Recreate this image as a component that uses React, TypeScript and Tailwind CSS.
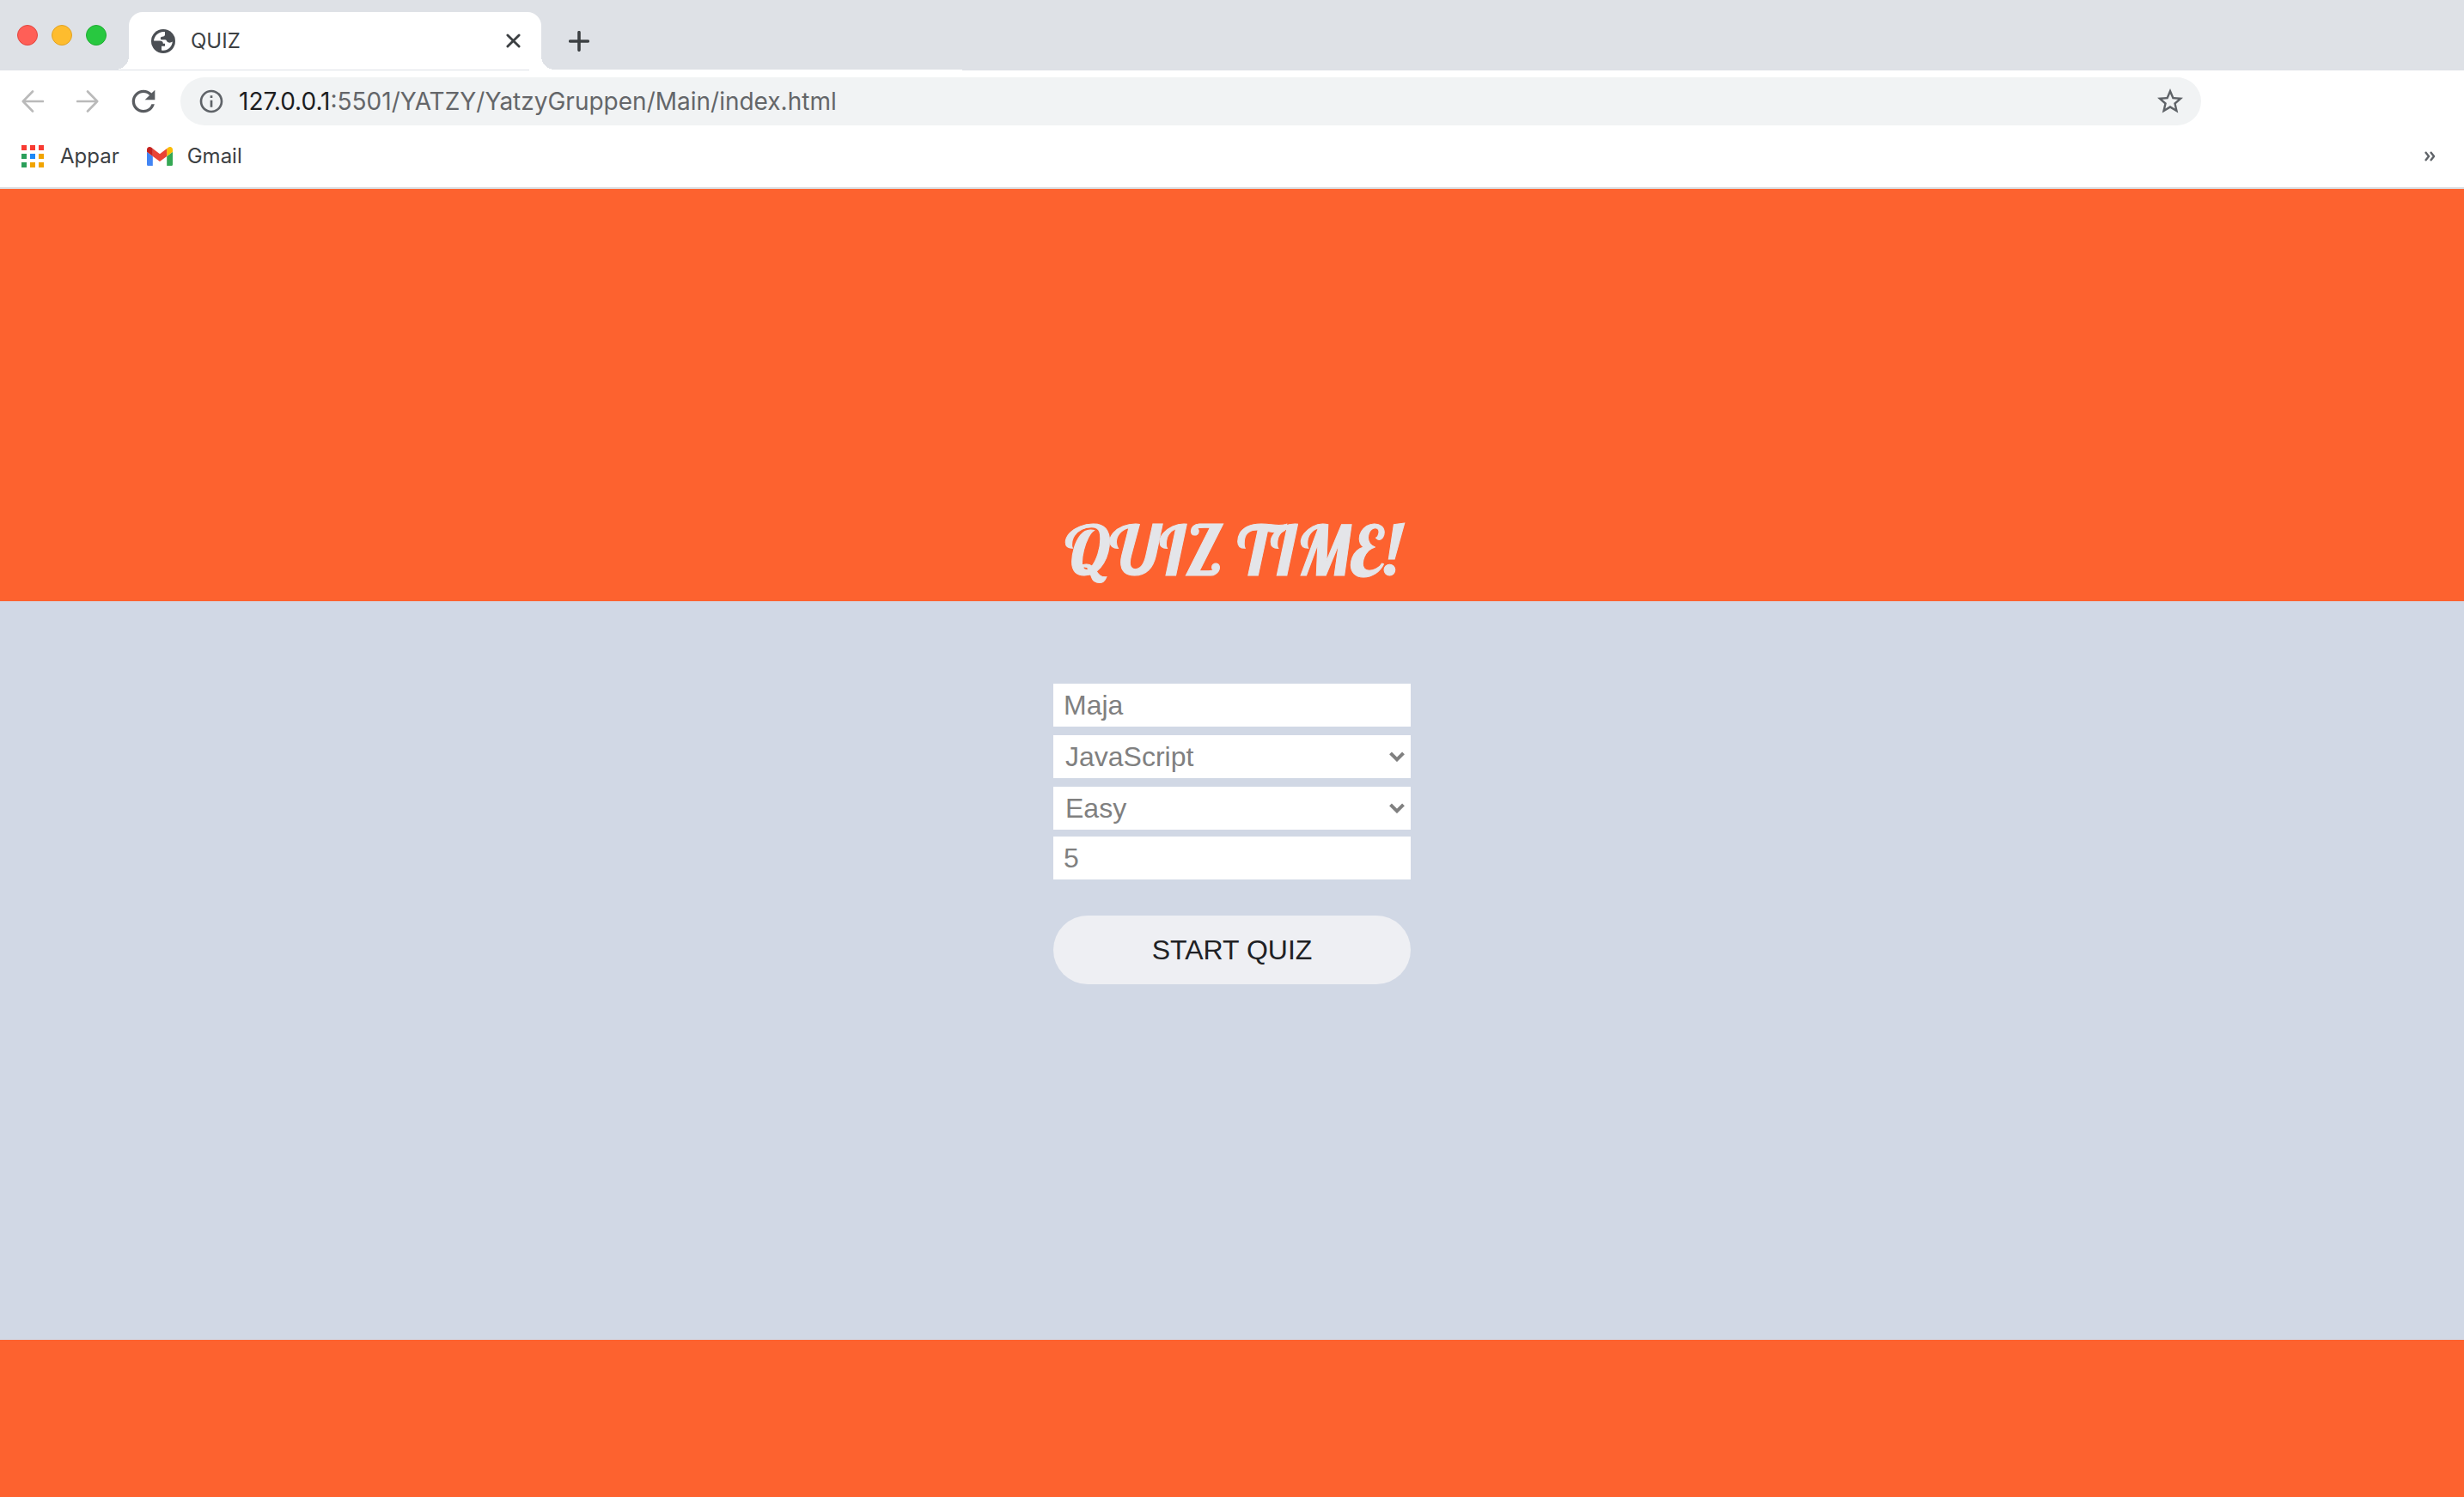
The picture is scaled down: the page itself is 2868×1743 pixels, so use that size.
import React from "react";
import { MdInfoOutline, MdRefresh, MdStarBorder } from "react-icons/md";

const APP_DOTS = [
  "fill-[#f83b32]", "fill-[#f83b32]", "fill-[#f83b32]",
  "fill-[#2b9f5a]", "fill-[#1e88f7]", "fill-[#f1a400]",
  "fill-[#2b9f5a]", "fill-[#f1a400]", "fill-[#f1a400]",
];

function GlobeIcon() {
  return (
    <svg viewBox="0 0 28 28" className="size-7" aria-hidden="true">
      <circle cx="14" cy="14" r="14" fill="#4b4f54" />
      <path
        d="M16 3C9 2 3.500 7.500 3 13.500h7c2.500 0 3.800 1 3.800 3.300H16v3h-4v4.800c6.500 1.200 12.300-3.500 12.800-10-2 1.500-5.300 1.500-6.600-.5-.5-1-.7-1.800-2-1.800H12c-1.500 0-1.500-3.500.5-3.500 2.500 0 3.500-1.200 3.500-2.500z"
        fill="#fff"
      />
    </svg>
  );
}

function BackIcon({ flipped = false }: { flipped?: boolean }) {
  return (
    <svg viewBox="0 0 26 26" className={flipped ? "size-[26px] rotate-180" : "size-[26px]"} aria-hidden="true">
      <path d="M13 1.500 1.800 13 13 24.500M2 13h23" fill="none" stroke="#bababa" strokeWidth="2.600" strokeLinecap="round" strokeLinejoin="round" />
    </svg>
  );
}

function GmailIcon() {
  return (
    <svg viewBox="52 42 88 66" className="w-[30px]" aria-hidden="true">
      <path fill="#4285f4" d="M58 108h14V74L52 59v43c0 3.320 2.690 6 6 6" />
      <path fill="#34a853" d="M120 108h14c3.320 0 6-2.690 6-6V59l-20 15" />
      <path fill="#fbbc04" d="M120 48v26l20-15v-8c0-7.420-8.470-11.650-14.400-7.200" />
      <path fill="#ea4335" d="M72 74V48l24 18 24-18v26L96 92" />
      <path fill="#c5221f" d="M52 51v8l20 15V48l-5.600-4.200c-5.940-4.450-14.400-.22-14.400 7.200" />
    </svg>
  );
}

function BrowserChrome() {
  return (
    <header className="flex flex-col bg-white font-['Inter',sans-serif] text-[#3c4043]">
      <div className="flex h-[81px] items-end bg-[#dee1e6]">
        <div className="flex h-full w-[150px] shrink-0 items-center gap-4 pl-5">
          <button aria-label="Close window" className="size-6 rounded-full border border-[#e2463f] bg-[#ff5f57]" />
          <button aria-label="Minimize window" className="size-6 rounded-full border border-[#e1a325] bg-[#febc2e]" />
          <button aria-label="Zoom window" className="size-6 rounded-full border border-[#1fae33] bg-[#28c840]" />
        </div>
        <div className="relative flex h-[67px] w-[480px] items-center rounded-t-2xl bg-white pr-6 pl-[26px] before:absolute before:bottom-0 before:-left-4 before:size-4 before:bg-[radial-gradient(circle_at_top_left,transparent_16px,white_16px)] after:absolute after:-right-4 after:bottom-0 after:size-4 after:bg-[radial-gradient(circle_at_top_right,transparent_16px,white_16px)]">
          <GlobeIcon />
          <span className="ml-[18px] flex-1 text-2xl">QUIZ</span>
          <button aria-label="Close tab">
            <svg viewBox="0 0 18 18" className="size-[17px]" aria-hidden="true">
              <path d="M2 2l14 14M16 2 2 16" stroke="#3c4043" strokeWidth="3" strokeLinecap="round" />
            </svg>
          </button>
        </div>
        <button aria-label="New tab" className="ml-8 flex h-[67px] items-center">
          <svg viewBox="0 0 24 24" className="size-6" aria-hidden="true">
            <path d="M12 1.700v20.600M1.700 12h20.600" stroke="#3c4043" strokeWidth="3.600" strokeLinecap="round" />
          </svg>
        </button>
      </div>
      <div className="flex h-px bg-[#dee1e6]">
        <div className="ml-[616px] w-[504px] bg-white" />
      </div>
      <nav aria-label="Navigation" className="flex h-[72px] items-center pl-[25px]">
        <button aria-label="Back"><BackIcon /></button>
        <button aria-label="Forward" className="ml-[38px]"><BackIcon flipped /></button>
        <button aria-label="Reload" className="ml-8"><MdRefresh className="size-10 text-[#5a5d61]" /></button>
        <div className="mr-[306px] ml-[23px] flex h-14 flex-1 items-center rounded-full bg-[#f1f3f4] pr-[18px] pl-5">
          <MdInfoOutline className="size-8 text-[#5f6368]" />
          <p className="ml-4 flex-1 text-[28px] text-[#646669]">
            <span className="text-[#1c1d1f]">127.0.0.1</span>:5501/YATZY/YatzyGruppen/Main/index.html
          </p>
          <button aria-label="Bookmark this page"><MdStarBorder className="size-9 text-[#5f6368]" /></button>
        </div>
      </nav>
      <nav aria-label="Bookmarks" className="flex h-[66px] items-center border-b-2 border-[#dadce0] pr-[34px] pb-2 pl-[25px] text-2xl">
        <a href="#apps" className="flex items-center gap-[19px]">
          <svg viewBox="0 0 26 26" className="size-[26px]" aria-hidden="true">
            {APP_DOTS.map((fill, i) => (
              <rect key={i} x={(i % 3) * 10} y={Math.floor(i / 3) * 10} width="6" height="6" className={fill} />
            ))}
          </svg>
          Appar
        </a>
        <a href="#gmail" className="ml-8 flex items-center gap-[17px]"><GmailIcon />Gmail</a>
        <button aria-label="More bookmarks" className="ml-auto">
          <svg viewBox="0 0 12 12" className="size-3" aria-hidden="true">
            <path d="M1 1l4 5-4 5M7 1l4 5-4 5" fill="none" stroke="#5f6368" strokeWidth="2.400" />
          </svg>
        </button>
      </nav>
    </header>
  );
}

function Picker({ label, options }: { label: string; options: string[] }) {
  return (
    <div className="relative">
      <select aria-label={label} className="block h-[50px] w-full appearance-none bg-white px-3.5 text-[32px] leading-[50px] text-[#808080]">
        {options.map((o) => <option key={o}>{o}</option>)}
      </select>
      <svg viewBox="0 0 18 12" className="pointer-events-none absolute top-[19px] right-[7px] h-3 w-[18px]" aria-hidden="true">
        <path d="M1.500 1.800 9 9.300l7.500-7.500" fill="none" stroke="#808080" strokeWidth="4" />
      </svg>
    </div>
  );
}

export default function App() {
  return (
    <div className="flex min-h-screen flex-col bg-[#fd622f]">
      <BrowserChrome />
      <div className="flex h-[480px] items-end justify-center">
        <h1 className="font-['Lobster','Liberation_Serif',serif] text-[80px] leading-[120px] font-normal text-[#e4e5e9] [-webkit-text-stroke:1px_#e4e5e9]">QUIZ TIME!</h1>
      </div>
      <main className="flex h-[860px] justify-center bg-[#d1d8e5] pt-24 font-['Liberation_Sans',Arial,sans-serif]">
        <form className="flex w-[416px] flex-col" onSubmit={(e) => e.preventDefault()}>
          <div className="flex flex-col gap-2.5">
            <input aria-label="Name" defaultValue="Maja" className="h-[50px] bg-white px-3 text-[32px] text-[#808080]" />
            <Picker label="Category" options={["JavaScript", "HTML", "CSS"]} />
            <Picker label="Difficulty" options={["Easy", "Medium", "Hard"]} />
          </div>
          <input aria-label="Number of questions" inputMode="numeric" defaultValue="5" className="mt-2 h-[50px] bg-white px-3 text-[32px] text-[#808080]" />
          <button className="mt-[42px] h-20 rounded-full bg-[#eeeff3] text-[32px] text-[#202124]">START QUIZ</button>
        </form>
      </main>
    </div>
  );
}
